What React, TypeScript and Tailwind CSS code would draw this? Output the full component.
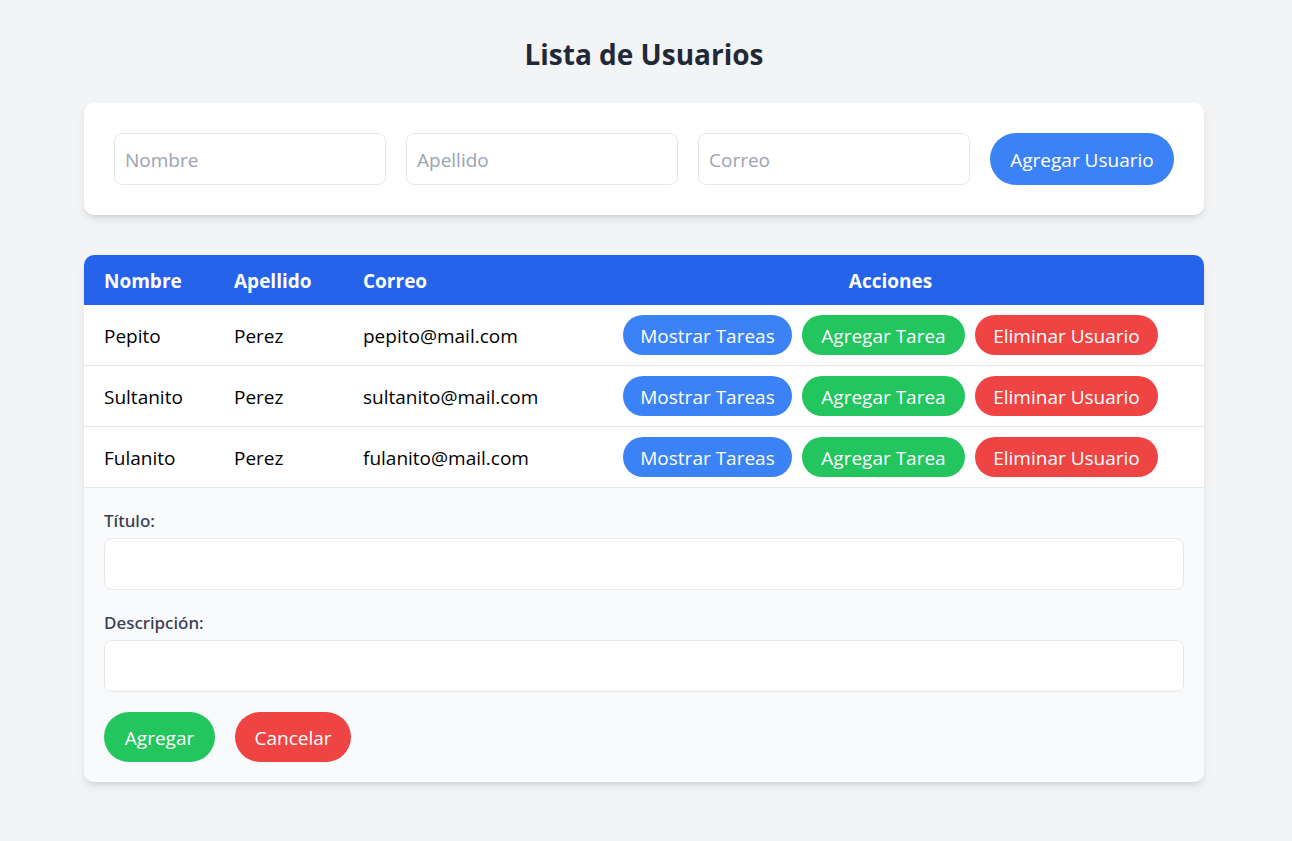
import { useState } from "react";
import type { ButtonHTMLAttributes, InputHTMLAttributes } from "react";
import clsx from "clsx";

type User = { nombre: string; apellido: string; correo: string };

const users: User[] = [
  { nombre: "Pepito", apellido: "Perez", correo: "pepito@mail.com" },
  { nombre: "Sultanito", apellido: "Perez", correo: "sultanito@mail.com" },
  { nombre: "Fulanito", apellido: "Perez", correo: "fulanito@mail.com" },
];

const tones = {
  blue: "bg-[#3b82f6] hover:bg-[#2563eb]",
  green: "bg-[#22c55e] hover:bg-[#16a34a]",
  red: "bg-[#ef4444] hover:bg-[#dc2626]",
};

type PillProps = ButtonHTMLAttributes<HTMLButtonElement> & { tone: keyof typeof tones };

function Pill({ tone, className, ...props }: PillProps) {
  return (
    <button
      type="button"
      className={clsx("shrink-0 rounded-full pt-0.5 text-center whitespace-nowrap text-white", tones[tone], className)}
      {...props}
    />
  );
}

function TextBox({ className, ...props }: InputHTMLAttributes<HTMLInputElement>) {
  return (
    <input
      className={clsx(
        "h-[52px] min-w-0 rounded-lg border border-[#e5e7eb] bg-white px-2.5 pt-0.5 placeholder:text-[#9ca3af]",
        className,
      )}
      {...props}
    />
  );
}

const card = "overflow-hidden rounded-[10px] bg-white shadow-[0_5px_8px_-1px_rgba(0,0,0,0.1),0_3px_5px_-3px_rgba(0,0,0,0.1)]";
const headCell = "pt-[11px] pb-[9px] font-bold";
const textCell = "border-b border-[#e5e7eb] pt-3 pb-2.5 pl-5";
const label = "font-['Noto_Sans','Open_Sans',sans-serif] text-[17px] leading-[25px] font-medium text-[#374151]";

export default function App() {
  const [showForm, setShowForm] = useState(true);

  return (
    <div className="min-h-screen bg-[#f3f4f6] pr-1 font-['Open_Sans','Noto_Sans',sans-serif] text-[19px] leading-[30px] text-black">
      <main className="mx-auto max-w-[1120px] pt-[34px] pb-10">
        <h1 className="mb-7 text-center text-[28px] leading-[41px] font-bold text-[#1f2937]">Lista de Usuarios</h1>

        <form className={clsx(card, "mb-10 flex gap-5 p-[30px]")} onSubmit={(e) => e.preventDefault()}>
          <TextBox className="flex-1" type="text" placeholder="Nombre" aria-label="Nombre" />
          <TextBox className="flex-1" type="text" placeholder="Apellido" aria-label="Apellido" />
          <TextBox className="flex-1" type="email" placeholder="Correo" aria-label="Correo" />
          <Pill tone="blue" type="submit" className="w-[184px]">
            Agregar Usuario
          </Pill>
        </form>

        <div className={card}>
          <table className="w-full table-fixed border-separate border-spacing-0">
            <thead className="bg-[#2563eb] text-left text-white">
              <tr>
                <th className={clsx(headCell, "w-[130px] pl-5")}>Nombre</th>
                <th className={clsx(headCell, "w-[129px] pl-5")}>Apellido</th>
                <th className={clsx(headCell, "w-[234px] pl-5")}>Correo</th>
                <th className={clsx(headCell, "text-center")}>Acciones</th>
              </tr>
            </thead>
            <tbody>
              {users.map((user) => (
                <tr key={user.correo}>
                  <td className={textCell}>{user.nombre}</td>
                  <td className={textCell}>{user.apellido}</td>
                  <td className={textCell}>{user.correo}</td>
                  <td className="border-b border-[#e5e7eb] py-2.5">
                    <div className="flex justify-center gap-2.5">
                      <Pill tone="blue" className="h-10 w-[169px]">
                        Mostrar Tareas
                      </Pill>
                      <Pill tone="green" className="h-10 w-[163px]" onClick={() => setShowForm(true)}>
                        Agregar Tarea
                      </Pill>
                      <Pill tone="red" className="h-10 w-[183px]">
                        Eliminar Usuario
                      </Pill>
                    </div>
                  </td>
                </tr>
              ))}
              {showForm && (
                <tr>
                  <td colSpan={4} className="bg-[#f9fafb] p-5">
                    <form className="flex flex-col gap-5" onSubmit={(e) => e.preventDefault()}>
                      <div className="flex flex-col gap-[5px]">
                        <label htmlFor="titulo" className={label}>
                          Título:
                        </label>
                        <TextBox id="titulo" type="text" />
                      </div>
                      <div className="flex flex-col gap-[5px]">
                        <label htmlFor="descripcion" className={label}>
                          Descripción:
                        </label>
                        <TextBox id="descripcion" type="text" />
                      </div>
                      <div className="flex gap-5">
                        <Pill tone="green" type="submit" className="h-[50px] w-[111px]">
                          Agregar
                        </Pill>
                        <Pill tone="red" className="h-[50px] w-[116px]" onClick={() => setShowForm(false)}>
                          Cancelar
                        </Pill>
                      </div>
                    </form>
                  </td>
                </tr>
              )}
            </tbody>
          </table>
        </div>
      </main>
    </div>
  );
}
